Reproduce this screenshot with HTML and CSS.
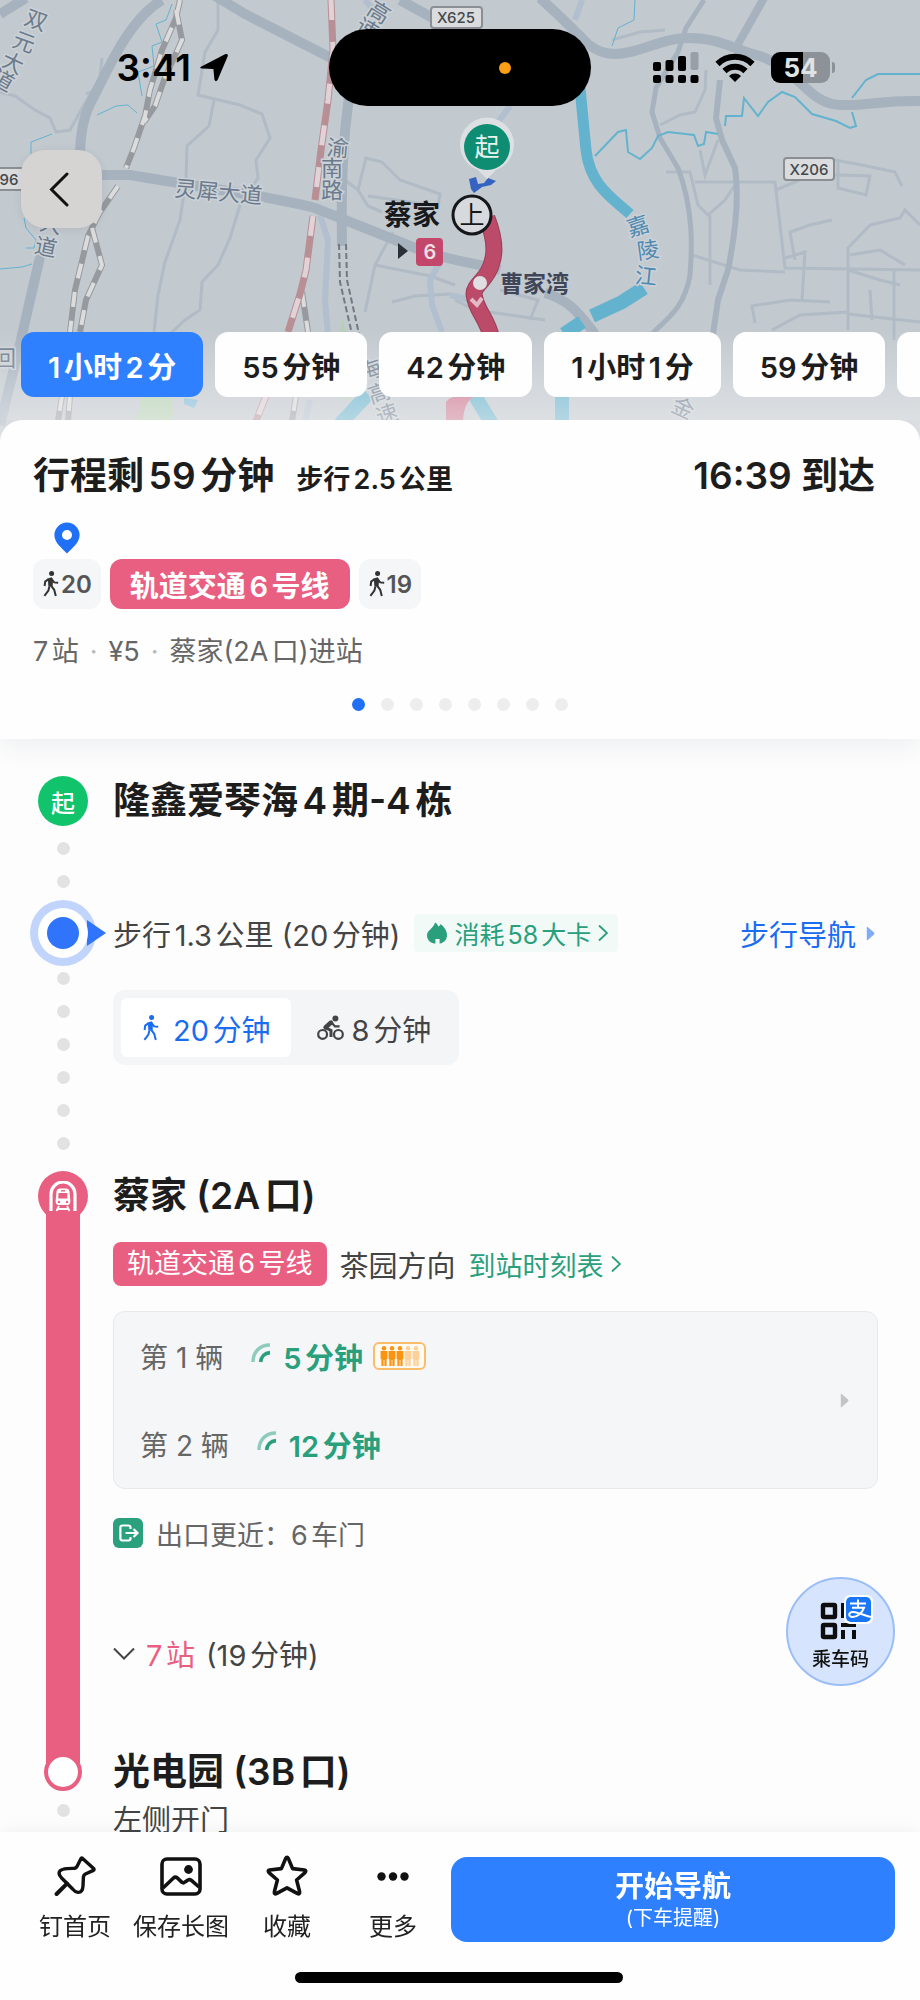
FILE: index.html
```html
<!DOCTYPE html>
<html lang="zh-CN">
<head>
    <meta charset="UTF-8">
    <meta name="viewport" content="width=device-width, initial-scale=1.0">
    <title>公交路线</title>

    <link rel="stylesheet" href="styles.css">
</head>
<body>

    <!-- shared icons -->
    <svg class="sprite" aria-hidden="true">
        <symbol id="walk" viewBox="0 0 16 26">
            <circle cx="8.6" cy="2.6" r="2.5" fill="currentColor"/>
            <path d="M4.8 7.6 L8.6 6.2 L10 8 L9.6 16 L5.4 15.4 Z" fill="currentColor"/>
            <path d="M5.6 8 L2.2 10.6 L1.6 15 M9 8.6 L11.2 11.4 L15.2 11.8 M8.6 15.4 L11.2 18.8 L12.8 25 M6.4 15.4 L5.4 19.6 L1.4 24.8" fill="none" stroke="currentColor" stroke-width="2"/>
        </symbol>
        <symbol id="signal" viewBox="0 0 20 20">
            <path d="M2 19 C2 9 8.6 2 19 2" fill="none" stroke="currentColor" stroke-width="3.4" opacity="0.5"/>
            <path d="M9.6 19 C10 13.6 13.6 10 19 9.6" fill="none" stroke="currentColor" stroke-width="3.6"/>
        </symbol>
        <symbol id="person" viewBox="0 0 8 21">
            <circle cx="4" cy="2.2" r="2.2"/>
            <path d="M0.6 5 H7.4 V13 H6.6 V20 H4.4 V14 H3.6 V20 H1.4 V13 H0.6 Z"/>
        </symbol>
        <symbol id="chevron" viewBox="0 0 10 18">
            <path d="M1 1.5 L9 9 L1 16.5" fill="none" stroke="currentColor" stroke-width="1.8"/>
        </symbol>
        <symbol id="triangle" viewBox="0 0 9 15">
            <path d="M0.8 1.6 Q0.8 0 2 1.2 L8 6.6 Q9 7.5 8 8.4 L2 13.8 Q0.8 15 0.8 13.4 Z" fill="currentColor"/>
        </symbol>
    </svg>

    <!-- map section start -->

    <header class="map">
        <svg class="map-bg" viewBox="0 0 920 440" preserveAspectRatio="xMidYMin slice">
            <g fill="none" stroke="#b1bbc5" stroke-width="3">
                <path d="M0 92 L15 96 L35 110 L50 118 L56 132 L70 130 L80 112 L100 78 L102 58 M86 94 L104 86"/>
                <path d="M218 0 L218 30 L205 52 L198 95 L240 105 L262 114 L270 138 L256 160 L258 178 L240 205 L230 238 L218 265 L202 282 L200 310 L185 320 L170 334"/>
                <path d="M214 100 L209 126 L187 146 L186 180 L180 220 L165 262 L158 295 L154 332"/>
                <path d="M345 180 L358 190 L366 158 L382 162 L400 180 L440 194 L438 206 L368 196 M358 190 L368 206 L382 212 M393 232 L375 265 L365 312"/>
                <path d="M375 265 L400 270 L430 276 L455 285 M392 302 L415 296 L450 294 M455 300 L475 310 L545 320 M500 290 L538 300 L530 320"/>
                <path d="M612 40 L640 32 L665 30 M660 125 L680 115 L695 112 L705 90 L706 70"/>
                <path d="M666 172 L690 172 L698 205 L708 215 L725 200 L735 185 M700 150 L705 175 L718 140 M695 182 L775 182 L785 268 L920 270 M692 255 L740 270 L785 272"/>
                <path d="M710 215 L710 285 M776 190 L800 180 L835 160 L862 165 L895 172 L902 186 M838 160 L838 188 L866 195 L870 176 L835 175"/>
                <path d="M795 260 L790 232 L810 225 L832 220 M848 330 L848 248 L870 225 L900 218 L905 210 L920 225 M848 270 L880 280 L900 285 M894 340 L894 270 M850 255 L880 250 L905 265"/>
                <path d="M755 323 L752 306 L790 300 L830 302 M772 330 L800 315 L848 312 M802 300 L805 252 L785 258 M848 314 L920 322 M870 290 L872 320"/>
            </g>
            <g fill="none" stroke="#b2bfce" stroke-width="6">
                <path d="M320 215 L328 240 L325 300 L328 335 M310 400 L305 421"/>
                <path d="M365 0 L372 8 M440 262 L430 280 L432 305 L442 332"/>
                <path d="M582 0 L575 20 M510 106 L498 122 M450 295 L470 300"/>
            </g>
            <g fill="none" stroke="#a7b2bf" stroke-width="10">
                <path d="M162 0 C128 20 108 70 90 104 C82 120 80 140 80 158"/>
                <path d="M44 240 L30 300 L20 344 L0 425"/>
                <path d="M0 14 L26 -2"/>
                <path d="M215 -4 L245 14 L335 60"/>
                <path d="M400 0 L440 22 M540 -2 C560 16 570 26 580 36 C590 48 600 53 614 54 C640 54 660 38 688 38 C720 38 730 48 760 56 C800 70 808 104 840 105 C870 106 880 100 920 101"/>
                <path d="M96 175 L130 175 C200 187 270 196 315 208 C350 222 380 234 415 248 C450 262 475 262 500 270 M545 293 C570 300 580 315 595 334"/>
                <path d="M349 96 C343 140 341 180 342 246"/>
                <path d="M764 -2 L738 44" stroke-width="8"/>
                <path d="M704 0 L686 28 L678 52 L656 88 L652 112 L660 138 L678 168 C694 210 692 250 690 275 C684 310 665 320 652 334" stroke-width="5"/>
                <path d="M720 80 L716 118 L722 140 L735 168 C740 200 734 240 728 270 L718 300 L713 334" stroke-width="6"/>
            </g>

            <!-- water -->
            <g fill="none" stroke="#64b3ce">
                <path d="M580 88 L586 150 C590 185 612 198 630 214" stroke-width="11"/>
                <path d="M644 288 L622 302 L592 316 M582 322 L564 334 M562 395 V424 M475 396 L492 424 M368 394 L340 424" stroke-width="14"/>
                <path d="M172 4 L166 20 L156 24 L162 42 L152 46 L154 66 L138 72 L142 96 M97 115 L116 106 L128 105 L137 113 M52 134 L31 142 L31 154 M0 269 L22 267 L32 264 M24 218 L26 228 L36 240 L34 248 L26 248 M635 0 L634 20 L618 28 L612 46"/>
                <path d="M595 156 L618 132 L626 130 L628 152 L640 159 L652 148 L658 136 L668 132 L694 135 L698 146 L704 144 L706 132 L718 134 M725 126 L726 116 L742 116 L744 98 L758 116 L768 102 L782 92 L795 97 L812 114 L836 121 L850 128 L856 126 L852 112 M852 98 L866 80 L878 74 L920 74" stroke-width="2"/>
            </g>
            <path d="M143 396 L172 398 L174 421 L135 421 Z M342 318 L346 335 L340 335 Z M338 396 L350 396 L348 400 Z" fill="#b5d2b0"/>
            <path d="M184 398 L198 400 L194 408 L184 404 Z" fill="#7bb9d6"/>

            <!-- railways -->
            <g fill="none" stroke="#969a9f" stroke-width="6">
                <path d="M180 0 L176 18 L162 50 L150 90 L145 116 L134 148 L126 168 M118 186 L100 212 L88 236 L75 290 L70 332 M62 396 L58 421"/>
                <path d="M176 10 L182 40 L164 80 L155 106 L144 122 M92 228 L102 265 L86 300 L80 332 M70 396 L68 421 M302 292 L308 332 M296 396 L292 421"/>
            </g>
            <g fill="none" stroke="#dcdcdc" stroke-width="4" stroke-dasharray="15 14">
                <path d="M180 0 L176 18 L162 50 L150 90 L145 116 L134 148 L126 168 M118 186 L100 212 L88 236 L75 290 L70 332 M62 396 L58 421"/>
                <path d="M176 10 L182 40 L164 80 L155 106 L144 122 M92 228 L102 265 L86 300 L80 332 M70 396 L68 421 M302 292 L308 332 M296 396 L292 421"/>
            </g>
            <path d="M331 0 L333 50 L328 100 L321 150 L315 200 M313 216 L306 270 L300 294 L288 332 M266 396 L256 421" fill="none" stroke="#b98f96" stroke-width="7"/>
            <path d="M331 0 L333 50 L328 100 L321 150 L315 200 M313 216 L306 270 L300 294 L288 332 M266 396 L256 421" fill="none" stroke="#e0d2d5" stroke-width="5" stroke-dasharray="20 22"/>
            <path d="M339 244 L340 282 L352 334 M346 244 L347 280 L359 334" fill="none" stroke="#73797f" stroke-width="2" stroke-dasharray="6 3"/>

            <!-- road names -->
            <g class="road-name">
                <text x="174" y="196" transform="rotate(5 174 196)">灵犀大道</text>
                <text x="327" y="156" transform="rotate(5 338 147)">渝</text>
                <text x="321" y="176">南</text>
                <text x="321" y="198">路</text>
                <text x="25" y="28" transform="rotate(20 36 20)">双</text>
                <text x="13" y="50" transform="rotate(20 24 42)">元</text>
                <text x="2" y="71" transform="rotate(25 13 62)">大</text>
                <text x="-8" y="88" transform="rotate(30 3 80)">道</text>
                <text x="40" y="232" transform="rotate(12 51 224)">大</text>
                <text x="35" y="255" transform="rotate(12 46 247)">道</text>
                <text x="368" y="20" transform="rotate(32 379 12)">高</text>
                <text x="356" y="37" transform="rotate(32 367 29)">速</text>
                <text x="360" y="378" transform="rotate(-18 371 370)">海</text>
                <text x="368" y="401" transform="rotate(-18 379 393)">高</text>
                <text x="376" y="422" transform="rotate(-18 387 414)">速</text>
                <text x="672" y="416" transform="rotate(25 683 408)">金</text>
                <text x="-6" y="366">回</text>
            </g>
            <g class="river-name">
                <text x="627" y="234" transform="rotate(-18 638 226)">嘉</text>
                <text x="637" y="258" transform="rotate(-8 648 250)">陵</text>
                <text x="635" y="284" transform="rotate(6 646 276)">江</text>
            </g>

            <!-- road numbers -->
            <g class="road-no">
                <rect x="431" y="7" width="51" height="21" rx="3"/>
                <text x="456" y="23">X625</text>
                <rect x="784" y="158" width="50" height="22" rx="3"/>
                <text x="809" y="175">X206</text>
                <rect x="-20" y="168" width="44" height="22" rx="3"/>
                <text x="9" y="185">96</text>
            </g>

            <!-- current route -->
            <path d="M487 218 C494 236 496 250 492 262 C488 280 474 284 474 294 C476 312 488 318 492 340" fill="none" stroke="#993e55" stroke-width="17"/>
            <path d="M487 218 C494 236 496 250 492 262 C488 280 474 284 474 294 C476 312 488 318 492 340" fill="none" stroke="#bb4b68" stroke-width="15"/>
            <path d="M446 421 V402 Q450 396 460 396 H476 Q464 400 463 421 Z" fill="#d0708c"/>
            <circle cx="480" cy="283" r="7" fill="#dfdfe2"/>
            <path d="M471 299 L477 305 L482 298" fill="none" stroke="#e2b9c4" stroke-width="4"/>
            <path d="M469 179 L476 177 L478 184 L484 183 L488 178 L496 181 L491 185 L482 187 L474 193 L471 189 Z" fill="#3763c0"/>
            <path d="M487 179 L478 170 A27 27 0 1 1 496 170 Z" fill="#dde0e3"/>
            <circle cx="487" cy="147" r="23" fill="#0e8d72"/>
            <text x="487" y="156" class="start-mark">起</text>
            <circle cx="472" cy="215" r="19" fill="#d6d9dd" stroke="#15171a" stroke-width="3"/>
            <text x="472" y="224" class="on-mark">上</text>
            <text x="384" y="225" class="station-name">蔡家</text>
            <path d="M398 243 L408 251 L398 259 Z" fill="#2a3038"/>
            <rect x="416" y="238" width="27" height="28" rx="4" fill="#c3466b"/>
            <text x="430" y="259" class="line-no">6</text>
            <text x="500" y="292" class="next-name">曹家湾</text>
        </svg>

        <div class="status-bar">
            <div class="status-left">
                <time>3:41</time>
                <svg width="30" height="30" viewBox="0 0 30 30"><path d="M2.5 13.5 L26 1.2 Q29.5 0 28.6 3.6 L18.6 27 Q16.6 29.6 15.4 26.4 L14.4 16 L3.2 15.6 Q-0.4 15 2.5 13.5 Z"/></svg>
            </div>
            <div class="island"><i></i></div>
            <div class="status-right">
                <svg width="46" height="32" viewBox="0 0 46 32">
                    <rect x="0" y="10" width="8" height="9" rx="2"/>
                    <rect x="12.5" y="8" width="8" height="11" rx="2"/>
                    <rect x="25" y="4" width="8" height="15" rx="2"/>
                    <rect x="37.5" y="0" width="8" height="18" rx="2" fill="#98a0a7"/>
                    <rect x="0" y="23" width="8" height="8" rx="2"/>
                    <rect x="12.5" y="23" width="8" height="8" rx="2"/>
                    <rect x="25" y="23" width="8" height="8" rx="2"/>
                    <rect x="37.5" y="23" width="8" height="8" rx="2"/>
                </svg>
                <svg width="40" height="30" viewBox="0 0 40 30">
                    <path d="M2.5 11 A25 25 0 0 1 37.5 11" fill="none" stroke="#000" stroke-width="6"/>
                    <path d="M9.5 18 A15 15 0 0 1 30.5 18" fill="none" stroke="#000" stroke-width="6"/>
                    <path d="M20 29 L14 23 A8.6 8.6 0 0 1 26 23 Z"/>
                </svg>
                <span class="battery">54</span>
            </div>
        </div>

        <button class="back" aria-label="返回">
            <svg width="20" height="35" viewBox="0 0 20 35"><path d="M18 2 L2.5 17.5 L18 33" fill="none" stroke="#111" stroke-width="3" stroke-linecap="round"/></svg>
        </button>

        <nav class="plans">
            <button class="plan active">1小时2分</button>
            <button class="plan">55分钟</button>
            <button class="plan">42分钟</button>
            <button class="plan">1小时1分</button>
            <button class="plan">59分钟</button>
            <button class="plan"></button>
        </nav>
    </header>

    <!-- map section end -->

    <section class="summary">
        <div class="summary-head">
            <h1>行程剩59分钟</h1>
            <b>步行2.5公里</b>
            <strong>16:39 到达</strong>
        </div>

        <svg class="pin" width="26" height="32" viewBox="0 0 26 32">
            <path d="M13 0.5 A12.6 12.6 0 0 1 25.6 13 C25.6 21 18 26 13 31.5 C8 26 0.4 21 0.4 13 A12.6 12.6 0 0 1 13 0.5 Z M13 8 A5 5 0 1 0 13 18 A5 5 0 1 0 13 8 Z" fill="#1f70f5" fill-rule="evenodd"/>
        </svg>

        <div class="legs">
            <span class="leg"><svg width="16" height="26"><use href="#walk"/></svg>20</span>
            <span class="leg metro">轨道交通6号线</span>
            <span class="leg"><svg width="16" height="26"><use href="#walk"/></svg>19</span>
        </div>

        <p class="facts"><span>7站</span><i>·</i><span>¥5</span><i>·</i><span>蔡家(2A口)进站</span></p>

        <div class="pager">
            <i class="on"></i><i></i><i></i><i></i><i></i><i></i><i></i><i></i>
        </div>
    </section>

    <!-- route detail start -->

    <main>
        <ol class="route">
            <li class="step start">
                <div class="rail">
                    <span class="badge green">起</span>
                    <div class="dots"><i></i><i></i></div>
                </div>
                <h2>隆鑫爱琴海4期-4栋</h2>
            </li>

            <li class="step walking">
                <div class="rail">
                    <svg class="here" width="76" height="66" viewBox="0 0 76 66">
                        <circle cx="33" cy="33" r="33" fill="#c1d5fc"/>
                        <path d="M57 20 L76 33 L57 46 Z" fill="#2f74fb"/>
                        <circle cx="33" cy="33" r="25" fill="#fff"/>
                        <circle cx="33" cy="33" r="16" fill="#2f74fb"/>
                    </svg>
                    <div class="dots"><i></i><i></i><i></i><i></i><i></i><i></i></div>
                </div>
                <div class="info">
                    <div class="walk-row">
                        <p>步行1.3公里 (20分钟)</p>
                        <a href="#" class="calorie">
                            <svg width="20" height="22" viewBox="0 0 20 22"><path d="M8 0.5 C9.6 1.4 11 3 11.4 4.6 C12.6 4 13.2 3 13.6 2 C17.6 5 20 9 20 13 C20 17.4 17.4 20.6 13.4 21.4 L12.6 21.4 L12.6 17 H8.4 V21.4 H7 C3 20.6 0 17.4 0 13.4 C0 10.4 1.6 9 3.2 7.4 C5.2 5.4 7.4 3.6 8 0.5 Z" fill="currentColor"/></svg>
                            消耗58大卡
                            <svg width="10" height="18"><use href="#chevron"/></svg>
                        </a>
                        <a href="#" class="navi">步行导航 <svg width="9" height="15"><use href="#triangle"/></svg></a>
                    </div>
                    <div class="modes">
                        <button class="mode active"><svg width="16" height="26"><use href="#walk"/></svg>20分钟</button>
                        <button class="mode">
                            <svg width="27" height="26" viewBox="0 0 27 26">
                                <g fill="none" stroke="currentColor" stroke-width="2.2">
                                    <circle cx="5.6" cy="19.4" r="4.4"/>
                                    <circle cx="21.4" cy="19.4" r="4.4"/>
                                    <path d="M15 8 L18 11.4 L22.6 11.4"/>
                                </g>
                                <path d="M8.5 12.5 L14 7.5" stroke="currentColor" stroke-width="4.4" stroke-linecap="round"/>
                                <path d="M9 13 L14 15.4 L14 22" fill="none" stroke="currentColor" stroke-width="3"/>
                                <circle cx="18.4" cy="3.6" r="3" fill="currentColor"/>
                            </svg>8分钟
                        </button>
                    </div>
                </div>
            </li>

            <li class="step riding">
                <div class="rail">
                    <span class="badge pink">
                        <svg width="28" height="31" viewBox="0 0 28 31" fill="none" stroke="#fff">
                            <path d="M2 30 V13 A12 12 0 0 1 26 13 V30" stroke-width="3.2"/>
                            <path d="M10.5 7.4 H17.5 Q20 7.4 20.4 10 L21.4 20 Q21.4 24 18.4 24 H9.6 Q6.6 24 6.6 20 L7.6 10 Q8 7.4 10.5 7.4 Z" fill="#fff" stroke="none"/>
                            <path d="M10 25 L7.5 30 M18 25 L20.5 30 M8.5 28 H19.5" stroke-width="1.8"/>
                            <path d="M9.6 12 H18.4 V17.6 H9.2 Z" fill="#e95f82" stroke="none"/>
                            <path d="M12 9.8 H16" stroke="#e95f82" stroke-width="1.4"/>
                            <circle cx="10" cy="21" r="1.2" fill="#e95f82" stroke="none"/>
                            <circle cx="18" cy="21" r="1.2" fill="#e95f82" stroke="none"/>
                        </svg>
                    </span>
                </div>
                <div class="info">
                    <h2>蔡家 (2A口)</h2>
                    <div class="line-row">
                        <span class="line-tag">轨道交通6号线</span>
                        <span class="direction">茶园方向</span>
                        <a href="#" class="timetable">到站时刻表 <svg width="10" height="18"><use href="#chevron"/></svg></a>
                    </div>
                    <div class="arrivals">
                        <div>
                            <p>第 1 辆 <svg width="20" height="20"><use href="#signal"/></svg><b>5分钟</b>
                                <span class="crowd">
                                    <svg width="8" height="21"><use href="#person"/></svg>
                                    <svg width="8" height="21"><use href="#person"/></svg>
                                    <svg width="8" height="21"><use href="#person"/></svg>
                                    <svg class="off" width="8" height="21"><use href="#person"/></svg>
                                    <svg class="off" width="8" height="21"><use href="#person"/></svg>
                                </span>
                            </p>
                            <p>第 2 辆 <svg width="20" height="20"><use href="#signal"/></svg><b>12分钟</b></p>
                        </div>
                        <svg class="more" width="9" height="15"><use href="#triangle"/></svg>
                    </div>
                    <p class="exit">
                        <svg width="30" height="30" viewBox="0 0 30 30">
                            <rect width="30" height="30" rx="6" fill="#2aa07d"/>
                            <path d="M17.5 11 V9.4 Q17.5 7.5 15.5 7.5 H9.4 Q7.4 7.5 7.4 9.4 V20.6 Q7.4 22.5 9.4 22.5 H15.5 Q17.5 22.5 17.5 20.6 V19 M12.5 15 H24 M20.5 11 L24.5 15 L20.5 19" fill="none" stroke="#fff" stroke-width="2.2"/>
                        </svg>
                        出口更近：6车门
                    </p>
                    <button class="stops">
                        <svg width="22" height="13" viewBox="0 0 22 13"><path d="M1 1.5 L11 11.5 L21 1.5" fill="none" stroke="#444" stroke-width="2"/></svg>
                        <em>7站</em> (19分钟)
                    </button>
                </div>
            </li>

            <li class="step end">
                <div class="rail">
                    <span class="ring"></span>
                    <div class="dots"><i></i></div>
                </div>
                <div class="info">
                    <h2>光电园 (3B口)</h2>
                    <p>左侧开门</p>
                </div>
            </li>
        </ol>
    </main>

    <!-- route detail end -->

    <button class="ride-code">
        <svg width="54" height="46" viewBox="0 0 54 46">
            <g fill="none" stroke="#0d0d0d" stroke-width="4.4">
                <rect x="4" y="10" width="12" height="12" rx="1"/>
                <rect x="4" y="30" width="12" height="12" rx="1"/>
                <path d="M24 8 V23 M22 30 H37 M24 35 V44 M35 35 V44" stroke-width="4"/>
            </g>
            <rect x="25" y="0" width="29" height="29" rx="6" fill="#fff"/>
            <rect x="27" y="2" width="25" height="25" rx="5" fill="#1a76f8"/>
            <path d="M31 8.6 H47 M39 4.6 V12.6 M33 12.8 H45 C43 18 38 22.4 33 22 C28.6 21.4 29.6 16.6 34.6 17 C39.6 17.4 45 20.6 52 22" fill="none" stroke="#fff" stroke-width="2"/>
        </svg>
        乘车码
    </button>

    <!-- bottom bar start -->

    <footer>
        <div class="bar">
            <div class="actions">
                <button class="action">
                    <svg width="42" height="42" viewBox="0 0 42 42" fill="none" stroke="#111" stroke-width="3.4" stroke-linejoin="round" stroke-linecap="round">
                        <path d="M27 3.5 Q27.5 2.6 28.6 3.4 L39.6 13.4 Q40.6 14.6 39.4 15.4 L31.4 19 Q29.6 20 29.4 22 L29 31 Q28.6 37.6 24 37.4 Q21 37 18.6 34 L7.6 23 Q3.6 18.4 6 15.8 Q8 14 13 13.6 L19 13.4 Q22 13.4 23 11.4 Z"/>
                        <path d="M13 28.6 L2.6 39" stroke-width="4"/>
                    </svg>
                    钉首页
                </button>
                <button class="action">
                    <svg width="42" height="42" viewBox="0 0 42 42" fill="none" stroke="#111" stroke-width="3.6" stroke-linejoin="round">
                        <rect x="2" y="4" width="38" height="35" rx="5"/>
                        <path d="M3 33 L13.5 23 Q15.4 21.4 17.4 23 L22 27.4 Q23.4 28.4 25 27 L28 25 Q29.6 24 31.4 25.4 L39 32"/>
                        <circle cx="28.5" cy="14.5" r="4.4" fill="#111" stroke="none"/>
                    </svg>
                    保存长图
                </button>
                <button class="action">
                    <svg width="42" height="42" viewBox="0 0 42 42" fill="none" stroke="#111" stroke-width="3.6" stroke-linejoin="round">
                        <path d="M19.6 3.6 Q21 1 22.4 3.6 L26.6 13.6 L38.4 15 Q40.8 15.6 39 17.6 L30.6 25 L33.6 36.6 Q34 39.8 31.2 38.4 L21 32.8 L10.8 38.4 Q8 39.8 8.4 36.6 L11.4 25 L3 17.6 Q1.2 15.6 3.6 15 L15.4 13.6 Z"/>
                    </svg>
                    收藏
                </button>
                <button class="action">
                    <svg width="42" height="42" viewBox="0 0 42 42" fill="#111">
                        <circle cx="9.5" cy="21.5" r="4.2"/>
                        <circle cx="21" cy="21.5" r="4.2"/>
                        <circle cx="32.5" cy="21.5" r="4.2"/>
                    </svg>
                    更多
                </button>
            </div>
            <button class="go"><b>开始导航</b><small>(下车提醒)</small></button>
        </div>
        <div class="home-bar"></div>
    </footer>

    <!-- bottom bar end -->

</body>
</html>
```

FILE: styles.css
```css
* {
  padding: 0;
  margin: 0;
  box-sizing: border-box;
}

body {
  min-height: 100vh;
  padding-bottom: 156px;
  background-color: #fdfdfd;
  color: #1d1d1d;
  font-family: Inter, "Noto Sans CJK SC", sans-serif;
  font-size: 28px;
  text-autospace: normal;
}

button {
  border: none;
  background: none;
  color: inherit;
  font: inherit;
  white-space: nowrap;
}

a {
  text-decoration: none;
}

svg {
  display: block;
  flex-shrink: 0;
}

i, em {
  font-style: normal;
}

.sprite {
  position: absolute;
  width: 0;
  height: 0;
}

/* map */

.map {
  position: relative;
  overflow: hidden;
  padding: 29px 0 43px;
  background-color: #c2c9cf;
}

.map::after {
  content: "";
  position: absolute;
  left: 0;
  right: 0;
  bottom: 0;
  height: 110px;
  background: linear-gradient(rgba(240, 241, 242, 0), rgba(240, 241, 242, 0.7));
}

.map-bg {
  position: absolute;
  top: 0;
  left: 0;
  width: 100%;
  height: 100%;
}

.road-name {
  font-size: 22px;
  fill: #6b7a8c;
  stroke: #ccd2d7;
  stroke-width: 3px;
  paint-order: stroke;
}

.river-name {
  font-size: 22px;
  fill: #4f8ab2;
  stroke: #ccd2d7;
  stroke-width: 3px;
  paint-order: stroke;
}

.road-no {
  font-size: 15px;
  font-weight: 500;
  text-anchor: middle;

  rect {
    fill: #dadcde;
    stroke: #8b8f93;
    stroke-width: 2px;
  }

  text {
    fill: #44484c;
  }
}

.start-mark {
  font-size: 25px;
  fill: #e8f2ef;
  text-anchor: middle;
}

.on-mark {
  font-size: 25px;
  fill: #15171a;
  text-anchor: middle;
}

.station-name {
  font-size: 28px;
  font-weight: 700;
  fill: #17191c;
}

.line-no {
  font-size: 20px;
  font-weight: 600;
  fill: #ecdfe3;
  text-anchor: middle;
}

.next-name {
  font-size: 23px;
  font-weight: 700;
  fill: #3f4657;
}

.status-bar {
  position: relative;
  display: grid;
  grid-template-columns: 1fr 262px 1fr;
  align-items: center;
  height: 77px;
  color: #000;
}

.status-left {
  display: flex;
  align-items: center;
  justify-content: flex-end;
  gap: 8px;
  padding-right: 100px;
  font-size: 37px;
  font-weight: 600;
}

.island {
  display: flex;
  align-items: center;
  justify-content: flex-end;
  height: 77px;
  padding-right: 80px;
  border-radius: 39px;
  background-color: #000;

  i {
    width: 12px;
    height: 12px;
    border-radius: 50%;
    background-color: #ff9f16;
  }
}

.status-right {
  display: flex;
  align-items: center;
  gap: 16px;
  padding-left: 62px;
}

.battery {
  position: relative;
  width: 59px;
  height: 31px;
  border-radius: 9px;
  background: linear-gradient(90deg, #000 54%, #8c9298 54%);
  color: #dfe3e6;
  font-size: 26px;
  font-weight: 700;
  line-height: 31px;
  text-align: center;
}

.battery::after {
  content: "";
  position: absolute;
  top: 10px;
  right: -5px;
  width: 3px;
  height: 11px;
  border-radius: 0 3px 3px 0;
  background-color: #8c9298;
}

.back {
  position: relative;
  display: flex;
  align-items: center;
  justify-content: center;
  width: 81px;
  height: 78px;
  margin: 44px 0 0 21px;
  padding-right: 6px;
  border-radius: 24px;
  background-color: #d5d4d3;
  box-shadow: 0 2px 10px rgba(0, 0, 0, 0.08);
}

.plans {
  position: relative;
  z-index: 1;
  display: flex;
  gap: 12px;
  overflow: hidden;
  margin-top: 104px;
  padding-left: 21px;
}

.plan {
  flex-shrink: 0;
  min-width: 151px;
  height: 65px;
  padding: 0 27px;
  border-radius: 13px;
  background-color: #fefefe;
  font-size: 29px;
  font-weight: 600;

  &.active {
    background-color: #2e80ff;
    color: #fff;
  }
}

/* summary card */

.summary {
  position: relative;
  z-index: 2;
  margin-top: -20px;
  padding: 30px 45px 28px 33px;
  border-radius: 22px 22px 0 0;
  background-color: #fefefe;
  box-shadow: 0 6px 28px rgba(30, 50, 80, 0.08);
  clip-path: inset(0 0 -40px 0);
}

.summary-head {
  display: flex;
  align-items: baseline;
  gap: 22px;
  line-height: 52px;

  h1, strong {
    font-size: 37px;
    font-weight: 600;
  }

  b {
    font-size: 27px;
    font-weight: 600;
  }

  strong {
    margin-left: auto;
  }
}

.pin {
  margin: 16px 0 5px 21px;
}

.legs {
  display: flex;
  gap: 9px;
}

.leg {
  display: flex;
  align-items: center;
  gap: 2px;
  height: 50px;
  padding: 0 9px 0 10px;
  border-radius: 12px;
  background-color: #f4f6f7;
  color: #555;
  font-size: 24px;
  font-weight: 600;

  svg {
    color: #333;
  }

  &.metro {
    padding: 0 20px;
    background-color: #e95f82;
    color: #fff;
    font-size: 29px;
  }
}

.facts {
  display: flex;
  gap: 11px;
  margin-top: 23px;
  color: #666;
  font-size: 27px;
  line-height: 40px;

  i {
    color: #bbb;
  }
}

.pager {
  display: flex;
  justify-content: center;
  gap: 16px;
  margin: 26px -12px 0 0;

  i {
    width: 13px;
    height: 13px;
    border-radius: 50%;
    background-color: #ededed;
  }

  .on {
    background-color: #1f70f5;
  }
}

/* route detail */

.route {
  padding-top: 37px;
  list-style: none;
}

.step {
  display: grid;
  grid-template-columns: 113px 1fr;
  padding-right: 42px;

  h2 {
    font-size: 37px;
    font-weight: 600;
    line-height: 50px;
  }
}

.rail {
  display: flex;
  flex-direction: column;
  align-items: center;
  width: 126px;
}

.badge {
  display: flex;
  align-items: center;
  justify-content: center;
  width: 50px;
  height: 50px;
  border-radius: 50%;
  color: #fff;
  font-size: 24px;
  font-weight: 500;
}

.green {
  background-color: #11c46c;
}

.pink {
  background-color: #e95f82;
}

.dots {
  display: flex;
  flex-direction: column;
  gap: 20px;

  i {
    width: 13px;
    height: 13px;
    border-radius: 50%;
    background-color: #e2e2e2;
  }
}

.start {
  min-height: 124px;

  .dots {
    margin-top: 16px;
  }
}

.walking {
  padding-bottom: 106px;

  /* the dots run on down to the next stop */
  .rail {
    height: 165px;
  }

  .dots {
    margin-top: 6px;
  }
}

.here {
  margin-left: 10px;
}

.walk-row {
  display: flex;
  align-items: center;
  height: 66px;
  color: #444;
  font-size: 29px;
  white-space: nowrap;
}

.calorie {
  display: flex;
  align-items: center;
  gap: 7px;
  height: 38px;
  margin-left: 14px;
  padding: 0 10px 0 13px;
  border-radius: 4px;
  background-color: #f1faf7;
  color: #2a9f7c;
  font-size: 25px;
}

.navi {
  display: flex;
  align-items: center;
  gap: 10px;
  margin-left: auto;
  padding-right: 3px;
  color: #1a6cf0;

  svg {
    color: #7fabf7;
  }
}

.modes {
  display: inline-flex;
  margin-top: 24px;
  padding: 8px;
  border-radius: 12px;
  background-color: #f4f5f7;
}

.mode {
  display: flex;
  align-items: center;
  gap: 14px;
  height: 59px;
  padding: 0 20px 0 22px;
  border-radius: 6px;
  color: #444;
  font-size: 29px;

  &.active {
    background-color: #fff;
    color: #1a6cf0;
  }

  &:last-child {
    gap: 8px;
    padding-left: 26px;
  }
}

.riding {
  padding-bottom: 80px;

  .rail {
    height: calc(100% + 90px);
    background: linear-gradient(#e95f82, #e95f82) 46px 25px / 34px 100% no-repeat;
  }
}

.line-row {
  display: flex;
  align-items: center;
  gap: 13px;
  margin-top: 21px;
  color: #444;
  font-size: 29px;
}

.line-tag {
  height: 44px;
  padding: 0 14px;
  border-radius: 8px;
  background-color: #e95f82;
  color: #fff;
  font-size: 27px;
  line-height: 44px;
}

.timetable {
  display: flex;
  align-items: center;
  gap: 7px;
  color: #2a9f7c;
  font-size: 27px;
}

.arrivals {
  display: flex;
  align-items: center;
  justify-content: space-between;
  margin-top: 25px;
  padding: 0 28px 0 26px;
  border: 1px solid #e6e8ea;
  border-radius: 12px;
  background-color: #f4f6f8;

  p {
    display: flex;
    align-items: center;
    height: 88px;
    color: #666;
    font-size: 28px;

    svg {
      color: #2a9f7c;
    }

    > svg {
      margin: 0 12px 6px 28px;
    }
  }

  b {
    color: #2a9f7c;
    font-size: 29px;
    font-weight: 600;
  }

  .more {
    color: #c2c4c6;
  }
}

.crowd {
  display: flex;
  align-items: center;
  justify-content: center;
  width: 53px;
  height: 28px;
  margin-left: 10px;
  border: 2px solid #f9bd6b;
  border-radius: 6px;
  background-color: #fffaf2;

  svg {
    fill: #fb9210;
  }

  .off {
    opacity: 0.4;
  }
}

.exit {
  display: flex;
  align-items: center;
  gap: 13px;
  height: 30px;
  margin-top: 29px;
  color: #666;
  font-size: 27px;
}

.stops {
  display: flex;
  align-items: center;
  gap: 11px;
  height: 40px;
  margin-top: 85px;
  color: #444;
  font-size: 29px;

  em {
    color: #e95f82;
  }
}

.end {
  position: relative;

  h2 {
    line-height: 38px;
  }

  p {
    margin-top: 11px;
    color: #444;
    font-size: 29px;
    line-height: 38px;
  }

  .dots {
    margin-top: 13px;
  }
}

.ring {
  width: 38px;
  height: 38px;
  border: 4px solid #e95f82;
  border-radius: 50%;
  background-color: #fff;
}

.ride-code {
  position: fixed;
  right: 25px;
  bottom: 314px;
  display: flex;
  flex-direction: column;
  align-items: center;
  gap: 5px;
  width: 109px;
  height: 109px;
  padding-top: 16px;
  border: 2px solid #9bbef8;
  border-radius: 50%;
  background-color: #d6e5fd;
  color: #111;
  font-size: 19px;
  font-weight: 500;
  line-height: 28px;

  svg {
    margin-left: 10px;
  }
}

/* bottom bar */

footer {
  position: fixed;
  left: 0;
  right: 0;
  bottom: 0;
  z-index: 3;
  padding: 25px 25px 17px 22px;
  background-color: #fefefe;
  box-shadow: 0 -2px 16px rgba(0, 0, 0, 0.05);
}

.bar {
  display: flex;
  align-items: flex-start;
  gap: 5px;
}

.actions {
  display: grid;
  grid-template-columns: repeat(4, 106px);
}

.action {
  display: flex;
  flex-direction: column;
  align-items: center;
  gap: 12px;
  color: #222;
  font-size: 24px;
  line-height: 36px;

  svg {
    margin-top: -2px;
  }
}

.go {
  display: flex;
  flex: 1;
  flex-direction: column;
  align-items: center;
  justify-content: center;
  height: 85px;
  border-radius: 16px;
  background-color: #2e80ff;
  color: #fff;

  b {
    font-size: 29px;
    font-weight: 600;
    line-height: 36px;
  }

  small {
    font-size: 20px;
    line-height: 26px;
  }
}

.home-bar {
  width: 328px;
  height: 11px;
  margin: 27px auto 0;
  border-radius: 6px;
  background-color: #000;
}
```
